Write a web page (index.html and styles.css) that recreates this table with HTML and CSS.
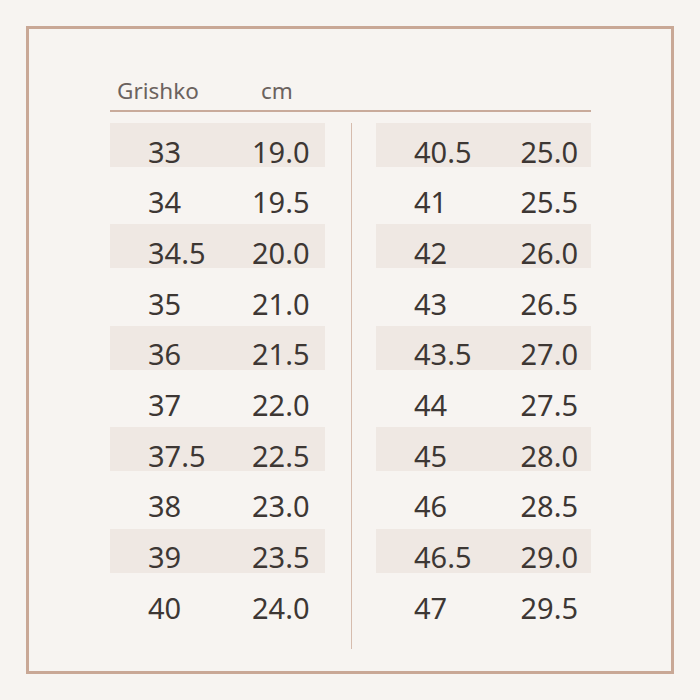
FILE: index.html
```html
<!DOCTYPE html>
<html>
<head>
<meta charset="utf-8">
<link rel="stylesheet" href="styles.css">
</head>
<body>
<div class="frame">
  <div class="chart">
    <div class="head">
      <span class="h1">Grishko</span>
      <span class="h2">cm</span>
    </div>
    <div class="tables">
      <div class="table">
        <div class="row shade"><span>33</span><span>19.0</span></div>
        <div class="row"><span>34</span><span>19.5</span></div>
        <div class="row shade"><span>34.5</span><span>20.0</span></div>
        <div class="row"><span>35</span><span>21.0</span></div>
        <div class="row shade"><span>36</span><span>21.5</span></div>
        <div class="row"><span>37</span><span>22.0</span></div>
        <div class="row shade"><span>37.5</span><span>22.5</span></div>
        <div class="row"><span>38</span><span>23.0</span></div>
        <div class="row shade"><span>39</span><span>23.5</span></div>
        <div class="row"><span>40</span><span>24.0</span></div>
      </div>
      <div class="divider"></div>
      <div class="table right">
        <div class="row shade"><span>40.5</span><span>25.0</span></div>
        <div class="row"><span>41</span><span>25.5</span></div>
        <div class="row shade"><span>42</span><span>26.0</span></div>
        <div class="row"><span>43</span><span>26.5</span></div>
        <div class="row shade"><span>43.5</span><span>27.0</span></div>
        <div class="row"><span>44</span><span>27.5</span></div>
        <div class="row shade"><span>45</span><span>28.0</span></div>
        <div class="row"><span>46</span><span>28.5</span></div>
        <div class="row shade"><span>46.5</span><span>29.0</span></div>
        <div class="row"><span>47</span><span>29.5</span></div>
      </div>
    </div>
  </div>
</div>
</body>
</html>
```
FILE: styles.css
```css
html, body {
  margin: 0;
  padding: 0;
  background: #f7f4f1;
}
body {
  width: 700px;
  height: 700px;
  padding-top: 26px;
  box-sizing: border-box;
  font-family: "Noto Sans", "Open Sans", sans-serif;
}
.frame {
  margin: 0 26px;
  width: 648px;
  height: 648px;
  box-sizing: border-box;
  border: 3px solid #c9a896;
}
.chart {
  margin-left: 81px;
  width: 481px;
}
.head {
  display: flex;
  padding-top: 47px;
  padding-left: 7px;
  height: 30px;
  line-height: 30px;
  font-size: 22.5px;
  color: #6b625e;
  border-bottom: 2px solid #c9ab9b;
  padding-bottom: 4px;
}
.h1 {
  width: 144px;
}
.tables {
  display: flex;
  margin-top: 11px;
}
.table {
  width: 215px;
}
.divider {
  width: 1px;
  height: 526px;
  margin: 0 24px 0 26px;
  background: #d6bcae;
}
.row {
  display: grid;
  grid-template-columns: 104px 1fr;
  padding-left: 38px;
  padding-top: 6.5px;
  height: 50.7px;
  box-sizing: border-box;
  line-height: 44px;
  font-size: 29px;
  color: #3d3734;
}
.right .row {
  grid-template-columns: 106.5px 1fr;
}
.shade {
  background: linear-gradient(#efe8e3, #efe8e3) no-repeat top left / 100% 44px;
}
```
